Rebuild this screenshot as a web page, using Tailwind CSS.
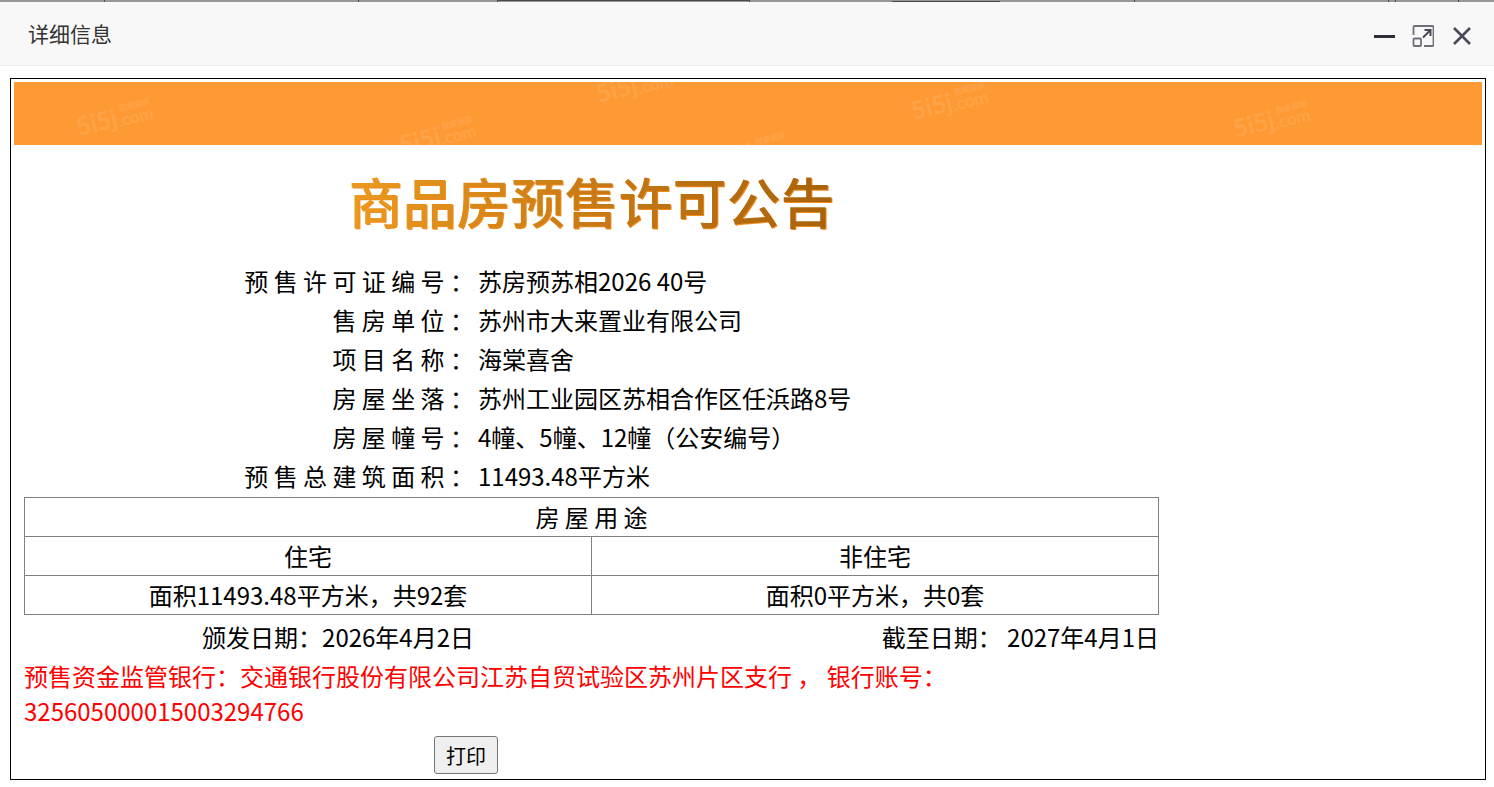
<!DOCTYPE html>
<html lang="zh-CN">
<head>
    <meta charset="UTF-8">
    <meta name="viewport" content="width=device-width, initial-scale=1.0">
    <title>详细信息</title>
    <script src="https://cdn.jsdelivr.net/npm/@tailwindcss/browser@4"></script>
</head>
<body class="bg-white text-black font-['Noto_Sans_CJK_SC',sans-serif]">

<!-- Strip of the page behind the dialog -->
<div class="relative h-[2px] bg-[#999695] overflow-hidden">
    <div class="absolute left-[104px] w-px h-full bg-[#4a4848]"></div>
    <div class="absolute left-[358px] w-px h-full bg-[#4a4848]"></div>
    <div class="absolute left-[497px] w-[253px] h-full border-x border-t border-[#4a4848]"></div>
    <div class="absolute left-[892px] top-px w-[108px] h-px bg-[#4a4848]"></div>
    <div class="absolute left-[1134px] w-px h-full bg-[#4a4848]"></div>
    <div class="absolute left-[1388px] w-[8px] h-full border-x border-[#4a4848]"></div>
    <div class="absolute left-[1458px] w-px h-full bg-[#4a4848]"></div>
</div>

<!-- Dialog header -->
<header class="flex items-center justify-between h-16 pl-7 pr-5 bg-[#f8f8f8] border-b border-[#eeeeee]">
    <h2 class="pb-[2px] text-[21px] leading-8 text-[#333333]">详细信息</h2>
    <div class="flex items-center gap-4 pt-1">
        <button type="button" aria-label="最小化" class="block">
            <svg class="block" width="24" height="24" viewBox="0 0 24 24"><rect x="2" y="11" width="21" height="3" fill="#2e2d3c"/></svg>
        </button>
        <button type="button" aria-label="最大化" class="block">
            <svg class="block" width="22" height="24" viewBox="0 0 22 24" fill="none" stroke="#6f6e7b" stroke-width="1.8">
                <path d="M1.5 11V3a1 1 0 0 1 1-1h18a1 1 0 0 1 1 1v18a1 1 0 0 1-1 1H12"/>
                <rect x="1.5" y="14.5" width="7.5" height="7.5" rx="1"/>
                <path stroke="#4a4957" stroke-width="2" d="M11 13.5L18 6.5M12.5 6H18.5V12"/>
            </svg>
        </button>
        <button type="button" aria-label="关闭" class="block">
            <svg class="block" width="24" height="24" viewBox="0 0 24 24" fill="none" stroke="#4a4957" stroke-width="2.6"><path d="M4 4L20 20M20 4L4 20"/></svg>
        </button>
    </div>
</header>

<main class="mt-3 ml-[10px] mr-2 mb-2 border border-black p-[3px]">

    <!-- Banner -->
    <div class="relative h-[63px] bg-[#ff9933] overflow-hidden text-white/10 font-bold">
        <div aria-hidden="true" class="absolute left-[61px] top-[22px] flex items-end -rotate-14 whitespace-nowrap">
            <span class="font-[Lato] text-[25px] leading-[26px]">5i5j</span>
            <span class="flex flex-col"><span class="pl-[4px] text-[8px] leading-[8px]">我爱我家</span><span class="font-[Lato] text-[17px] leading-[16px]">.com</span></span>
        </div>
        <div aria-hidden="true" class="absolute left-[384px] top-[40px] flex items-end -rotate-14 whitespace-nowrap">
            <span class="font-[Lato] text-[25px] leading-[26px]">5i5j</span>
            <span class="flex flex-col"><span class="pl-[4px] text-[8px] leading-[8px]">我爱我家</span><span class="font-[Lato] text-[17px] leading-[16px]">.com</span></span>
        </div>
        <div aria-hidden="true" class="absolute left-[581px] top-[-11px] flex items-end -rotate-14 whitespace-nowrap">
            <span class="font-[Lato] text-[25px] leading-[26px]">5i5j</span>
            <span class="flex flex-col"><span class="pl-[4px] text-[8px] leading-[8px]">我爱我家</span><span class="font-[Lato] text-[17px] leading-[16px]">.com</span></span>
        </div>
        <div aria-hidden="true" class="absolute left-[697px] top-[56px] flex items-end -rotate-14 whitespace-nowrap">
            <span class="font-[Lato] text-[25px] leading-[26px]">5i5j</span>
            <span class="flex flex-col"><span class="pl-[4px] text-[8px] leading-[8px]">我爱我家</span><span class="font-[Lato] text-[17px] leading-[16px]">.com</span></span>
        </div>
        <div aria-hidden="true" class="absolute left-[896px] top-[6px] flex items-end -rotate-14 whitespace-nowrap">
            <span class="font-[Lato] text-[25px] leading-[26px]">5i5j</span>
            <span class="flex flex-col"><span class="pl-[4px] text-[8px] leading-[8px]">我爱我家</span><span class="font-[Lato] text-[17px] leading-[16px]">.com</span></span>
        </div>
        <div aria-hidden="true" class="absolute left-[1218px] top-[24px] flex items-end -rotate-14 whitespace-nowrap">
            <span class="font-[Lato] text-[25px] leading-[26px]">5i5j</span>
            <span class="flex flex-col"><span class="pl-[4px] text-[8px] leading-[8px]">我爱我家</span><span class="font-[Lato] text-[17px] leading-[16px]">.com</span></span>
        </div>
    </div>

    <div class="ml-[10px] max-w-[1135px] text-[24px] leading-[35px]">
        <h1 class="pt-4 pb-5 text-center text-[54px] leading-[80px] font-medium">
            <span class="inline-block bg-linear-to-r from-[#ec9a1e] via-[#c87a14] to-[#a8620c] bg-clip-text text-transparent drop-shadow-[1px_1px_0_#f08a1c]">商品房预售许可公告</span>
        </h1>

        <!-- Permit details -->
        <table class="w-full table-fixed">
            <tbody>
                <tr>
                    <th scope="row" class="w-2/5 py-[2px] pr-1 font-normal text-right">预 售 许 可 证 编 号 ：</th>
                    <td class="py-[2px]">苏房预苏相2026 40号</td>
                </tr>
                <tr>
                    <th scope="row" class="py-[2px] pr-1 font-normal text-right">售 房 单 位 ：</th>
                    <td class="py-[2px]">苏州市大来置业有限公司</td>
                </tr>
                <tr>
                    <th scope="row" class="py-[2px] pr-1 font-normal text-right">项 目 名 称 ：</th>
                    <td class="py-[2px]">海棠喜舍</td>
                </tr>
                <tr>
                    <th scope="row" class="py-[2px] pr-1 font-normal text-right">房 屋 坐 落 ：</th>
                    <td class="py-[2px]">苏州工业园区苏相合作区任浜路8号</td>
                </tr>
                <tr>
                    <th scope="row" class="py-[2px] pr-1 font-normal text-right">房 屋 幢 号 ：</th>
                    <td class="py-[2px]">4幢、5幢、12幢（公安编号）</td>
                </tr>
                <tr>
                    <th scope="row" class="py-[2px] pr-1 font-normal text-right">预 售 总 建 筑 面 积 ：</th>
                    <td class="py-[2px]">11493.48平方米</td>
                </tr>
            </tbody>
        </table>

        <!-- Usage -->
        <table class="w-full mt-[2px] table-fixed border-collapse text-center">
            <thead>
                <tr><th colspan="2" class="h-[39px] pb-px border border-[#808080] font-normal">房 屋 用 途</th></tr>
                <tr>
                    <th class="h-[39px] pb-px border border-[#808080] font-normal">住宅</th>
                    <th class="h-[39px] pb-px border border-[#808080] font-normal">非住宅</th>
                </tr>
            </thead>
            <tbody>
                <tr>
                    <td class="h-[39px] pb-px border border-[#808080]">面积11493.48平方米，共92套</td>
                    <td class="h-[39px] pb-px border border-[#808080]">面积0平方米，共0套</td>
                </tr>
            </tbody>
        </table>

        <div class="flex pt-1">
            <p class="w-2/5 pr-1 text-right">颁发日期：2026年4月2日</p>
            <p class="w-3/5 text-right">截至日期： 2027年4月1日</p>
        </div>
        <p class="pt-1 text-[#ff0000]">预售资金监管银行：交通银行股份有限公司江苏自贸试验区苏州片区支行 ， 银行账号：325605000015003294766</p>

        <button type="button" onclick="window.print()" class="block mt-2 mb-[2px] ml-[410px] w-16 h-[38px] pt-[2px] rounded-[3px] border border-[#767676] bg-[#efefef] text-[20px] leading-7">打印</button>
    </div>
</main>

</body>
</html>
